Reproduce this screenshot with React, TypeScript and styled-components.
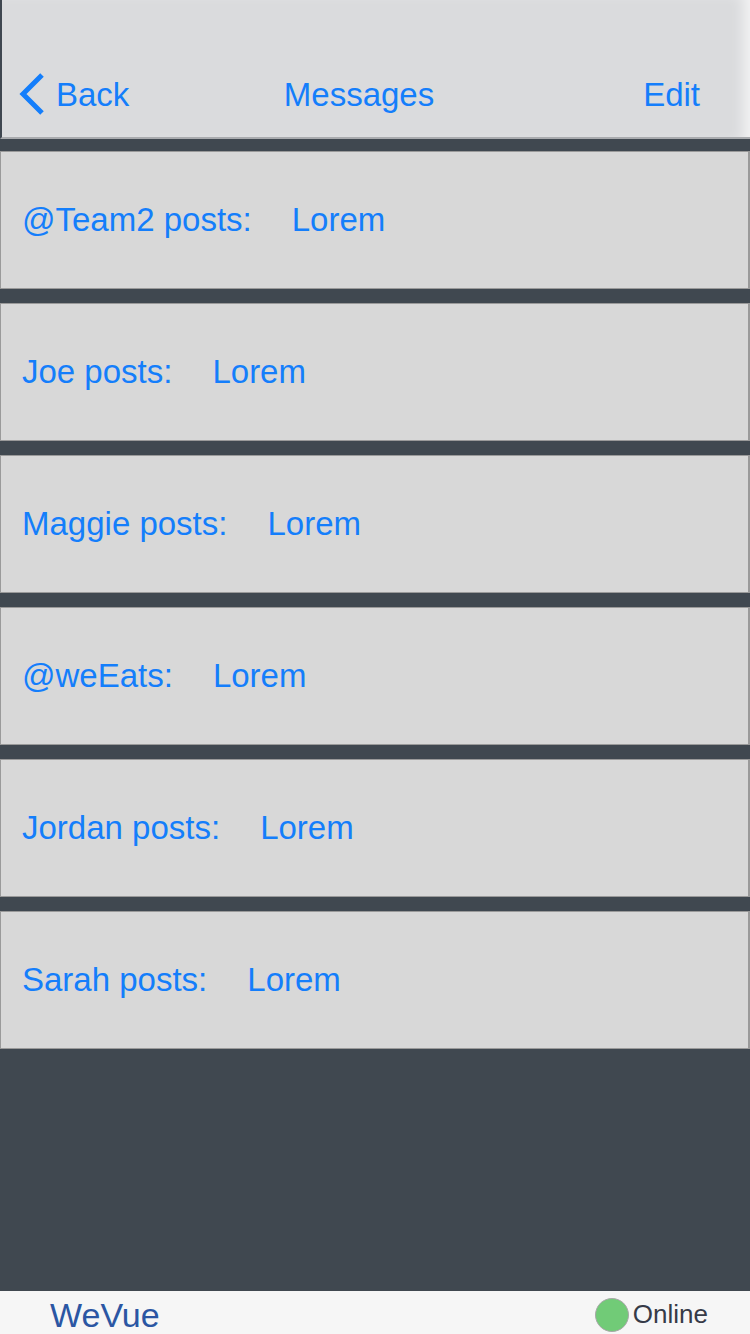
import React from "react";
import styled, { createGlobalStyle } from "styled-components";

const Global = createGlobalStyle`
  html, body { margin: 0; padding: 0; }
  body { font-family: "Liberation Sans", Arial, sans-serif; background: #404850; }
`;

const Page = styled.div`
  width: 750px;
  height: 1334px;
  display: flex;
  flex-direction: column;
  background: #404850;
  overflow: hidden;
`;

const Header = styled.header`
  height: 139px;
  flex: none;
  display: grid;
  grid-template-columns: 1fr auto 1fr;
  align-items: center;
  padding: 51px 50px 0 16px;
  box-sizing: border-box;
  background: #dadbdd;
  border-left: 2px solid #3f4750;
  border-bottom: 2px solid #a9abae;
  box-shadow: inset -14px 0 14px -8px rgba(255, 255, 255, 0.7);
`;

const NavButton = styled.button<{ $end?: boolean }>`
  border: none;
  background: none;
  padding: 0;
  display: flex;
  align-items: center;
  gap: 10px;
  justify-self: ${(p) => (p.$end ? "end" : "start")};
  font-family: "Liberation Sans", Arial, sans-serif;
  font-size: 33px;
  color: #147efb;
  line-height: 1;
`;

const Title = styled.div`
  font-size: 33px;
  line-height: 1;
  color: #147efb;
`;

const List = styled.div`
  display: flex;
  flex-direction: column;
  gap: 14px;
  padding-top: 12px;
`;

const Row = styled.div`
  height: 138px;
  box-sizing: border-box;
  background: #d8d8d8;
  border: 1px solid #9a9a9a;
  border-right-width: 2px;
  display: flex;
  align-items: center;
  padding-left: 21px;
  font-size: 33px;
  color: #147efb;
`;

const Author = styled.span`
  margin-right: 40px;
`;

const Spacer = styled.div`
  flex: 1;
`;

const Footer = styled.footer`
  height: 43px;
  flex: none;
  background: #f6f6f6;
  display: flex;
  align-items: center;
  justify-content: space-between;
  padding: 0 42px 0 50px;
`;

const Brand = styled.div`
  font-size: 34px;
  color: #2b56a3;
  line-height: 1;
  margin-top: 4px;
`;

const Status = styled.div`
  display: flex;
  align-items: center;
  gap: 4px;
  font-size: 26px;
  color: #363b48;
  margin-top: 4px;
`;

const Dot = styled.span`
  width: 34px;
  height: 34px;
  border-radius: 50%;
  background: #71cb77;
  border: 1px solid #a8a8a8;
  box-sizing: border-box;
  display: inline-block;
`;

const items = [
  { who: "@Team2 posts:", msg: "Lorem" },
  { who: "Joe posts:", msg: "Lorem" },
  { who: "Maggie posts:", msg: "Lorem" },
  { who: "@weEats:", msg: "Lorem" },
  { who: "Jordan posts:", msg: "Lorem" },
  { who: "Sarah posts:", msg: "Lorem" },
];

export default function App() {
  return (
    <>
      <Global />
      <Page>
        <Header>
          <NavButton>
            <svg width="28" height="44" viewBox="0 0 28 44">
              <polyline points="24,3 5,22 24,41" fill="none" stroke="#147efb" strokeWidth="5" />
            </svg>
            Back
          </NavButton>
          <Title>Messages</Title>
          <NavButton $end>Edit</NavButton>
        </Header>
        <List>
          {items.map((it, i) => (
            <Row key={i}>
              <Author>{it.who}</Author>
              {it.msg}
            </Row>
          ))}
        </List>
        <Spacer />
        <Footer>
          <Brand>WeVue</Brand>
          <Status>
            <Dot />
            Online
          </Status>
        </Footer>
      </Page>
    </>
  );
}
